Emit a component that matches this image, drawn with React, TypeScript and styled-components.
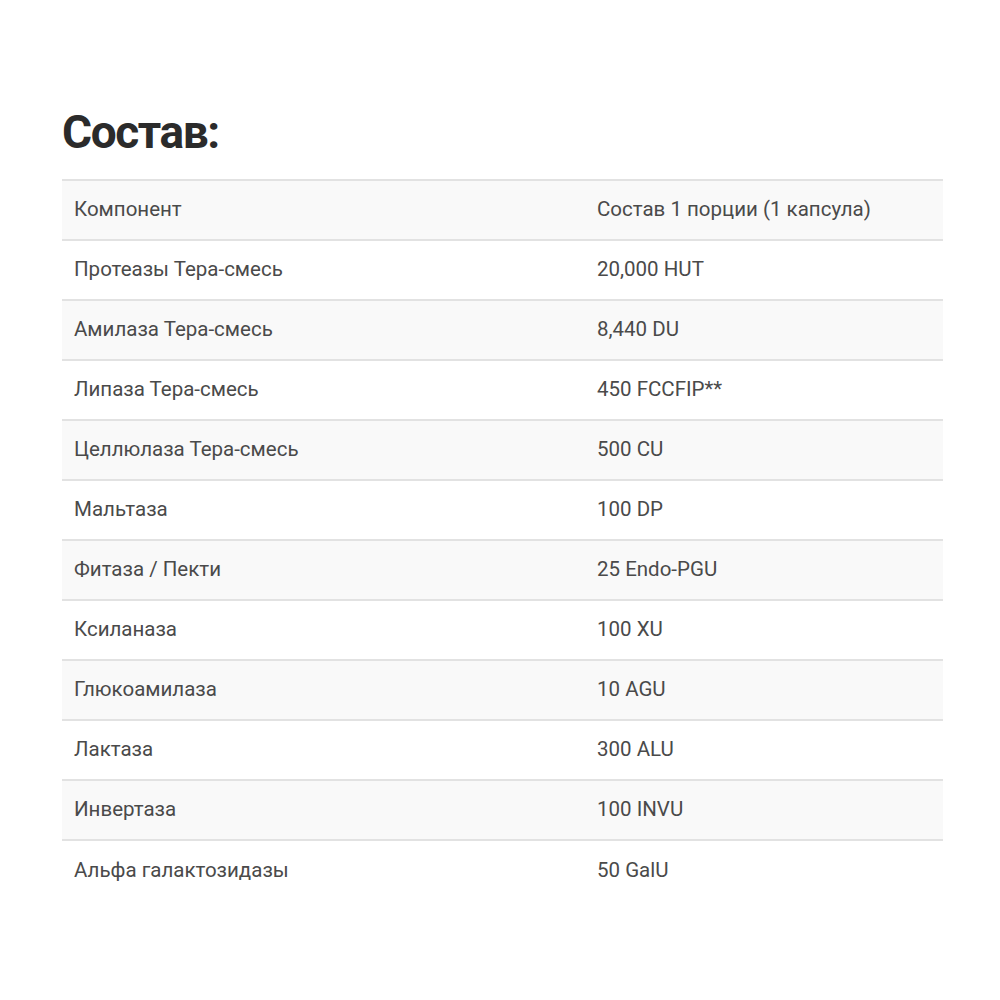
import styled, { createGlobalStyle } from "styled-components";

const rows: [string, string][] = [
  ["Протеазы Тера-смесь", "20,000 HUT"],
  ["Амилаза Тера-смесь", "8,440 DU"],
  ["Липаза Тера-смесь", "450 FCCFIP**"],
  ["Целлюлаза Тера-смесь", "500 CU"],
  ["Мальтаза", "100 DP"],
  ["Фитаза / Пекти", "25 Endo-PGU"],
  ["Ксиланаза", "100 XU"],
  ["Глюкоамилаза", "10 AGU"],
  ["Лактаза", "300 ALU"],
  ["Инвертаза", "100 INVU"],
  ["Альфа галактозидазы", "50 GalU"],
];

const GlobalStyle = createGlobalStyle`
  html, body {
    margin: 0;
    padding: 0;
    background: #fff;
  }
`;

export default function App() {
  return (
    <>
      <GlobalStyle />
      <Page>
        <Title>Состав:</Title>
        <Table>
          <colgroup>
            <col style={{ width: 523 }} />
            <col />
          </colgroup>
          <tbody>
            <Row $striped>
              <Cell>Компонент</Cell>
              <Cell>Состав 1 порции (1 капсула)</Cell>
            </Row>
            {rows.map(([name, amount], i) => (
              <Row key={name} $striped={i % 2 === 1} $last={i === rows.length - 1}>
                <Cell>{name}</Cell>
                <Cell>{amount}</Cell>
              </Row>
            ))}
          </tbody>
        </Table>
      </Page>
    </>
  );
}

const Page = styled.div`
  width: 881px;
  padding: 104px 0 0 62px;
  font-family: "Roboto", "Liberation Sans", sans-serif;
`;

const Title = styled.h2`
  margin: 0 0 19px;
  height: 56px;
  font-size: 46px;
  line-height: 56px;
  font-weight: 700;
  color: #2b2b2b;
  letter-spacing: -1.4px;
`;

const Table = styled.table`
  width: 881px;
  border-collapse: collapse;
  table-layout: fixed;
  border-top: 2px solid #e2e2e2;
`;

const Row = styled.tr<{ $striped?: boolean; $last?: boolean }>`
  height: 60px;
  background: ${({ $striped }) => ($striped ? "#f9f9f9" : "#fff")};
  border-bottom: ${({ $last }) => ($last ? "none" : "2px solid #e2e2e2")};
`;

const Cell = styled.td`
  padding: 0 12px 2px;
  font-size: 20.5px;
  color: #4a4a4a;
  vertical-align: middle;
  white-space: nowrap;
  letter-spacing: 0;
`;
